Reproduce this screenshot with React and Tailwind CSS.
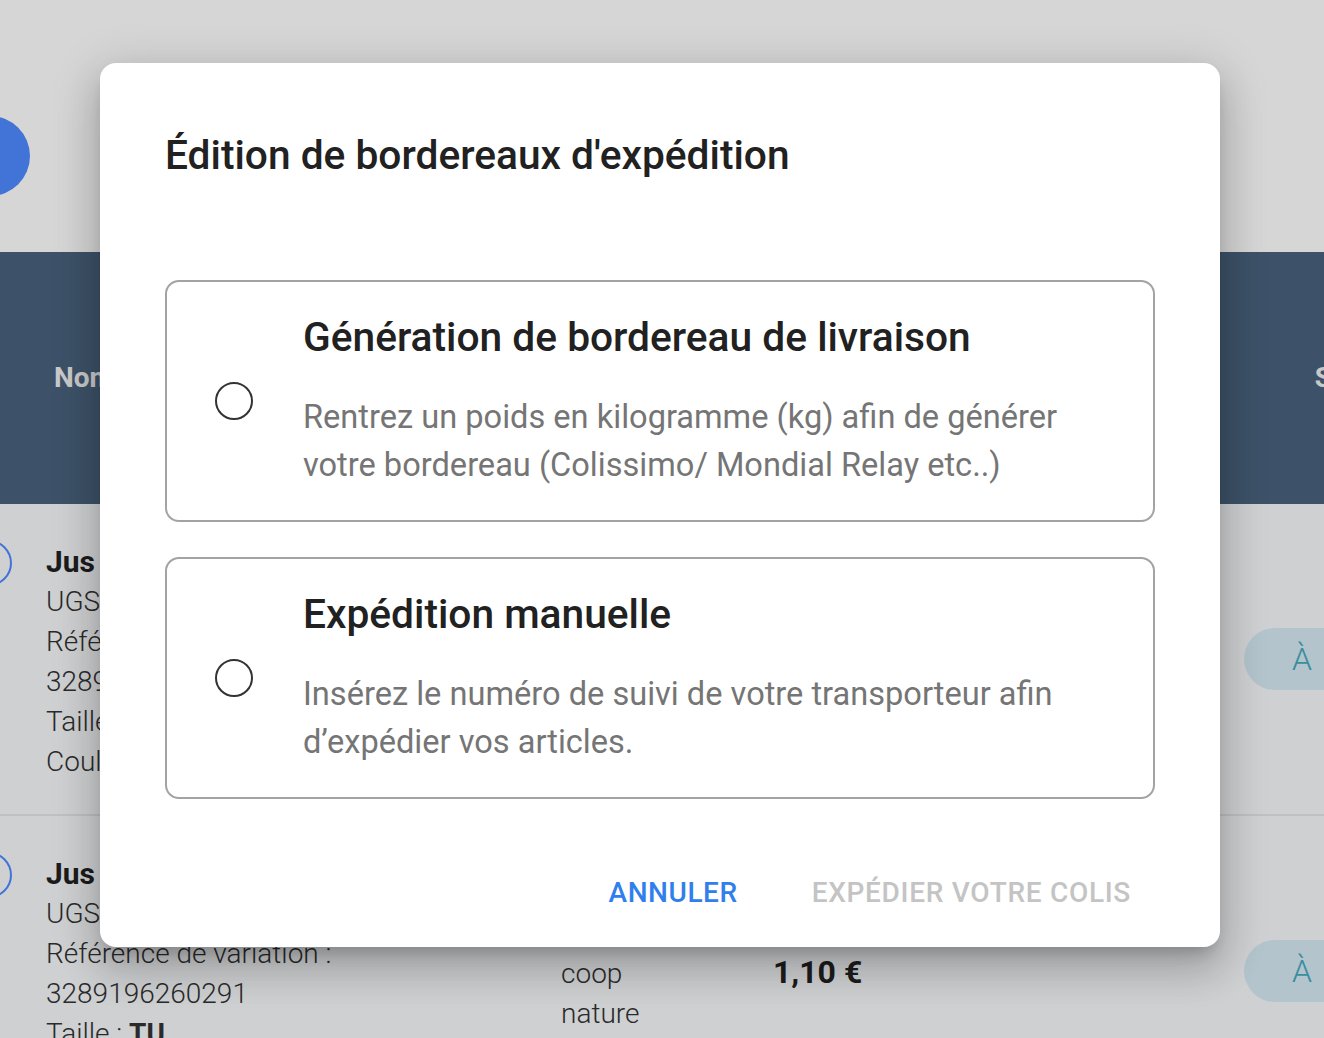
import React from 'react';

const options = [
    {
        title: "Génération de bordereau de livraison",
        text: "Rentrez un poids en kilogramme (kg) afin de générer votre bordereau (Colissimo/ Mondial Relay etc..)",
    },
    {
        title: "Expédition manuelle",
        text: "Insérez le numéro de suivi de votre transporteur afin d’expédier vos articles.",
    },
];

function OrderRow({ lines, extra }) {
    return (
        <div className="relative h-[312px] border-b-2 border-[#e3e5e8] pl-[46px] pt-[38px]">
            <div className="absolute left-[-34px] top-[36px] h-[46px] w-[46px] rounded-full border-2 border-[#4f8aff]"></div>
            <p className="text-[30px] font-bold leading-[40px] text-[#222]">Jus</p>
            {lines.map((l, i) => (
                <p key={i} className="text-[28px] font-light leading-[40px] text-[#333]">{l}</p>
            ))}
            {extra}
            <div className="absolute right-[-40px] top-[124px] flex h-[62px] w-[120px] items-center rounded-full bg-[#d6eaf3] pl-[48px] text-[32px] font-light text-[#45a9bc]">À</div>
        </div>
    );
}

function Background() {
    return (
        <div className="h-[1038px] w-[1324px] overflow-hidden bg-white">
            <div className="relative h-[252px]">
                <div className="absolute left-[-50px] top-[116px] h-[80px] w-[80px] rounded-full bg-[#4f8aff]"></div>
            </div>
            <div className="flex h-[252px] items-center justify-between bg-[#49627d] pl-[54px] text-[28px] font-bold text-[#f0f0f0]">
                <span>Nom</span>
                <span className="mr-[-8px]">S</span>
            </div>
            <div className="bg-[#f6f8fb]">
                <OrderRow lines={["UGS", "Référence", "3289", "Taille", "Couleur"]} />
                <div className="relative">
                    <OrderRow lines={["UGS", "Référence de variation :", "3289196260291"]} extra={
                        <p className="text-[28px] font-light leading-[40px] text-[#333]">Taille : <span className="font-bold">TU</span></p>
                    } />
                    <div className="absolute left-[561px] top-[138px] text-[28px] font-light leading-[40px] text-[#333]">
                        <p>coop</p>
                        <p>nature</p>
                    </div>
                    <div className="absolute left-[773px] top-[132px] text-[32px] font-bold text-[#222]">1,10 €</div>
                </div>
            </div>
        </div>
    );
}

export default function App() {
    return (
        <div className="relative h-[1038px] w-[1324px] overflow-hidden" style={{ fontFamily: "Roboto, 'Noto Sans', sans-serif" }}>
            <Background />
            <div className="absolute inset-0 bg-black/[0.16]"></div>
            <div className="absolute left-[100px] top-[63px] flex h-[884px] w-[1120px] flex-col rounded-[16px] bg-white px-[65px] shadow-[0_11px_15px_-7px_rgba(0,0,0,0.2),0_24px_38px_3px_rgba(0,0,0,0.14),0_9px_46px_8px_rgba(0,0,0,0.12)]">
                <h2 className="pt-[66px] text-[40.7px] font-medium leading-[52px] text-[#212121]">Édition de bordereaux d'expédition</h2>
                <div className="mt-[99px] flex flex-col gap-[35px]">
                    {options.map((o, i) => (
                        <label key={i} className="flex h-[242px] items-center rounded-[14px] border-2 border-[#a3a3a3] pl-[48px] pr-[60px]">
                            <span className="h-[38px] w-[38px] shrink-0 rounded-full border-2 border-[#333]"></span>
                            <div className="ml-[50px] flex flex-col">
                                <span className="text-[40.7px] font-medium leading-[48px] text-[#212121]">{o.title}</span>
                                <span className="mt-[32px] text-[32.6px] leading-[48px] text-[#757575]">{o.text}</span>
                            </div>
                        </label>
                    ))}
                </div>
                <div className="mt-auto flex justify-end gap-[74px] pb-[33px] pr-[24px]">
                    <button className="text-[28px] font-medium tracking-[0.02em] text-[#2f80ed]">ANNULER</button>
                    <button className="text-[28px] font-medium tracking-[0.025em] text-[#c4c4c4]">EXPÉDIER VOTRE COLIS</button>
                </div>
            </div>
        </div>
    );
}
